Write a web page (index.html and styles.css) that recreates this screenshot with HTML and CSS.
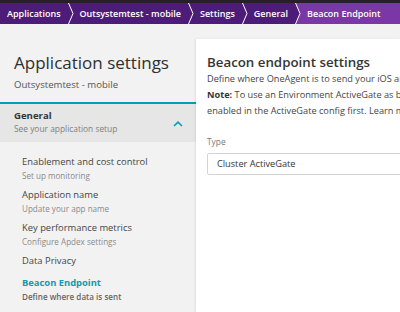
FILE: index.html
```html
<!DOCTYPE html>
<html lang="en">
<head>
	<meta charset="UTF-8">
	<title>Beacon Endpoint</title>
	<link rel="stylesheet" href="styles.css">
</head>
<body>
	<div class="crumbs">
		<span class="crumb first">Applications</span>
		<svg class="chev" width="6" height="21" viewBox="0 0 6 21"><polyline points="0.5,0 5,10.5 0.5,21" fill="none" stroke="#fff" stroke-width="1"/></svg>
		<span class="crumb">Outsystemtest - mobile</span>
		<svg class="chev" width="6" height="21" viewBox="0 0 6 21"><polyline points="0.5,0 5,10.5 0.5,21" fill="none" stroke="#fff" stroke-width="1"/></svg>
		<span class="crumb">Settings</span>
		<svg class="chev" width="6" height="21" viewBox="0 0 6 21"><polyline points="0.5,0 5,10.5 0.5,21" fill="none" stroke="#fff" stroke-width="1"/></svg>
		<span class="crumb">General</span>
		<svg class="chev last-chev" width="6" height="21" viewBox="0 0 6 21"><polygon points="0,0 0.5,0 5,10.5 0.5,21 0,21" fill="#4d1c79"/><polyline points="0.5,0 5,10.5 0.5,21" fill="none" stroke="#fff" stroke-width="1"/></svg>
		<span class="crumb current">Beacon Endpoint</span>
	</div>
	<div class="page">
		<div class="sidebar">
			<div class="side-head">
				<h1>Application settings</h1>
				<p>Outsystemtest - mobile</p>
			</div>
			<div class="group">
				<div class="group-text">
					<div class="group-title">General</div>
					<div class="group-sub">See your application setup</div>
				</div>
				<svg class="group-icon" width="10" height="6" viewBox="0 0 10 6"><polyline points="1,5 5,1.2 9,5" fill="none" stroke="#00a1b2" stroke-width="1.6"/></svg>
			</div>
			<div class="nav">
				<div class="nav-item">
					<div class="nav-title">Enablement and cost control</div>
					<div class="nav-sub">Set up monitoring</div>
				</div>
				<div class="nav-item">
					<div class="nav-title">Application name</div>
					<div class="nav-sub">Update your app name</div>
				</div>
				<div class="nav-item">
					<div class="nav-title">Key performance metrics</div>
					<div class="nav-sub">Configure Apdex settings</div>
				</div>
				<div class="nav-item single">
					<div class="nav-title">Data Privacy</div>
				</div>
				<div class="nav-item active">
					<div class="nav-title">Beacon Endpoint</div>
					<div class="nav-sub">Define where data is sent</div>
				</div>
			</div>
		</div>
		<div class="main">
			<h2>Beacon endpoint settings</h2>
			<p class="desc">Define where OneAgent is to send your iOS and Android application monitoring data.<br>
			<b>Note:</b> To use an Environment ActiveGate as beacon endpoint, the beacon forwarder must be<br>
			enabled in the ActiveGate config first. Learn more</p>
			<div class="label">Type</div>
			<div class="select">Cluster ActiveGate</div>
		</div>
	</div>
</body>
</html>
```

FILE: styles.css
```css
* {
	padding: 0;
	margin: 0;
	box-sizing: border-box;
}
body {
	width: 400px;
	height: 312px;
	overflow: hidden;
	font-family: "Open Sans", "Liberation Sans", sans-serif;
	color: #353535;
	background-color: #f2f2f2;
}
.crumbs {
	display: flex;
	align-items: center;
	height: 24px;
	padding-left: 1px;
	border-top: 3px solid #26202e;
	background-color: #4d1c79;
	white-space: nowrap;
}
.crumb {
	padding: 0 7px 0 6px;
	font-size: 9px;
	font-weight: 600;
	line-height: 21px;
	color: #fff;
}
.crumb.current {
	flex: 1;
	background-color: #7a37a5;
}
.chev {
	display: block;
	flex: none;
}
.last-chev {
	background-color: #7a37a5;
}
.page {
	display: flex;
	height: 288px;
}
.sidebar {
	width: 196px;
	flex: none;
	padding-top: 29px;
}
.side-head {
	padding: 0 14px 10px;
}
.side-head h1 {
	font-size: 17px;
	font-weight: 400;
	line-height: 20px;
	color: #2f2f2f;
}
.side-head p {
	margin-top: 5px;
	font-size: 9.6px;
	line-height: 14px;
	color: #555;
}
.group {
	display: flex;
	justify-content: space-between;
	align-items: center;
	height: 40px;
	padding: 5px 13px 7px 14px;
	border-top: 2px solid #00a1b2;
	background-color: #e6e6e6;
}
.group-title {
	font-size: 9.6px;
	font-weight: 700;
	line-height: 13px;
}
.group-sub {
	font-size: 8.4px;
	line-height: 13px;
	color: #808080;
}
.group-icon {
	margin-top: 4px;
}
.nav {
	padding: 13px 0 0 22px;
}
.nav-item {
	margin-bottom: 5px;
}
.nav-item.single {
	margin-bottom: 8px;
}
.nav-title {
	font-size: 9.4px;
	line-height: 14px;
	color: #454545;
}
.nav-sub {
	font-size: 8.1px;
	line-height: 14px;
	color: #8a8a8a;
}
.nav-item.active .nav-title {
	font-weight: 700;
	color: #0e9bb0;
}
.nav-item.active .nav-sub {
	font-weight: 600;
	color: #666;
}
.main {
	width: 204px;
	flex: none;
	margin-top: 15px;
	padding: 14px 0 0 11px;
	overflow: hidden;
	background-color: #fff;
	box-shadow: -1px 0 2px rgba(0, 0, 0, 0.08);
	white-space: nowrap;
}
.main h2 {
	font-size: 13.3px;
	font-weight: 600;
	line-height: 18px;
	color: #353535;
}
.desc {
	font-size: 9.2px;
	line-height: 16px;
	color: #454545;
}
.desc b {
	font-weight: 700;
	color: #353535;
}
.label {
	margin-top: 17px;
	font-size: 8.4px;
	line-height: 12px;
	color: #777;
}
.select {
	width: 260px;
	height: 22px;
	margin-top: 5px;
	padding-left: 9px;
	border: 1px solid #d4d4d4;
	border-radius: 2px;
	font-size: 9.2px;
	line-height: 20px;
	color: #353535;
}
```
